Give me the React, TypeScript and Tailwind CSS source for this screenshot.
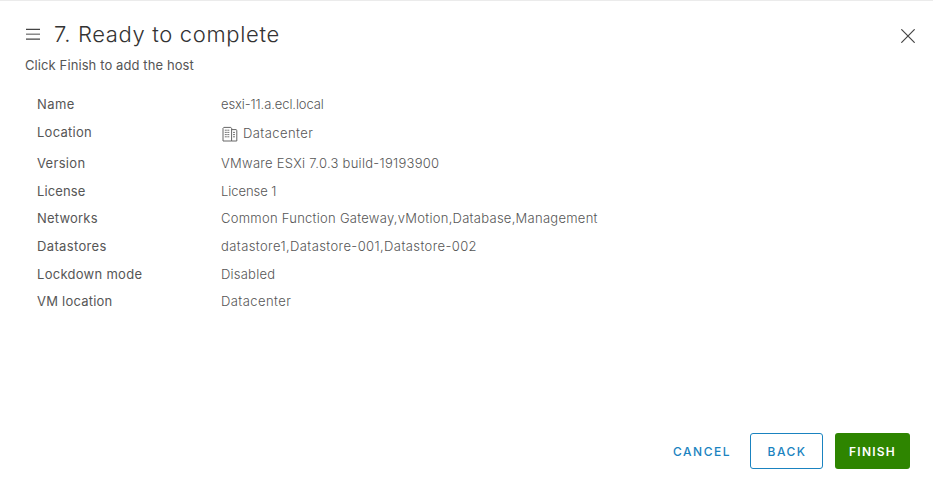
import React from 'react';

interface SummaryItem {
  label: string;
  value: string;
  labelClass: string;
  valueClass: string;
  icon?: boolean;
}

const SUMMARY: SummaryItem[] = [
  { label: 'Name', value: 'esxi-11.a.ecl.local', labelClass: 'tracking-[0.4px]', valueClass: 'tracking-[-0.1px]' },
  { label: 'Location', value: 'Datacenter', labelClass: 'tracking-[0.25px]', valueClass: 'tracking-[0.42px]', icon: true },
  { label: 'Version', value: 'VMware ESXi 7.0.3 build-19193900', labelClass: 'tracking-[0.3px]', valueClass: 'tracking-[0.28px]' },
  { label: 'License', value: 'License 1', labelClass: 'tracking-[0.1px]', valueClass: 'tracking-[-0.05px]' },
  { label: 'Networks', value: 'Common Function Gateway,vMotion,Database,Management', labelClass: 'tracking-[0.2px]', valueClass: 'tracking-[0.27px]' },
  { label: 'Datastores', value: 'datastore1,Datastore-001,Datastore-002', labelClass: 'tracking-[0.35px]', valueClass: 'tracking-[0.4px]' },
  { label: 'Lockdown mode', value: 'Disabled', labelClass: 'tracking-[0.28px]', valueClass: 'tracking-[0.22px]' },
  { label: 'VM location', value: 'Datacenter', labelClass: 'tracking-[0.22px]', valueClass: 'tracking-[0.42px]' },
];

export default function App() {
  return (
    <div className="h-[492px] w-[933px] flex flex-col overflow-hidden border-t border-[#ebebeb] bg-white font-['Inter',sans-serif] text-[#565656]">
      <header className="flex items-center h-[34px] mt-[16px] pl-[26px] pr-[18px]">
        <button type="button" className="w-[14px] shrink-0" aria-label="Steps">
          <MenuIcon />
        </button>
        <h1 className="ml-[14px] text-[22px] leading-[34px] font-light tracking-[0.65px] whitespace-nowrap text-[#333]">
          7. Ready to complete
        </h1>
        <button type="button" className="ml-auto mt-[3px]" aria-label="Close">
          <CloseIcon />
        </button>
      </header>

      <p className="pl-[25px] mt-[4px] text-[13px] leading-5 tracking-[0.1px] whitespace-nowrap text-[#555]">
        Click Finish to add the host
      </p>

      <dl className="mt-[16.4px] pl-[37px] text-[13px] whitespace-nowrap">
        {SUMMARY.map((item) => (
          <SummaryRow key={item.label} item={item} />
        ))}
      </dl>

      <footer className="mt-auto mb-[23px] pr-[23px] flex items-center justify-end text-[12px] font-medium">
        <button type="button" className="h-9 mr-[19px] pt-0.5 text-[#1a83c0] tracking-[1.5px]">
          CANCEL
        </button>
        <button
          type="button"
          className="h-9 w-[73px] mr-3 pt-0.5 pl-px rounded-[3px] border border-[#1a83c0] text-[#1a83c0] tracking-[1.5px]"
        >
          BACK
        </button>
        <button type="button" className="h-9 w-[75px] pt-0.5 rounded-[3px] bg-[#2e8500] text-white font-semibold tracking-[1.2px]">
          FINISH
        </button>
      </footer>
    </div>
  );
}

function SummaryRow({ item }: { item: SummaryItem }) {
  return (
    <div className={`flex leading-[27.66px] ${item.icon ? 'h-[31px]' : 'h-[27.66px]'}`}>
      <dt className={`w-[184px] ${item.labelClass}`}>{item.label}</dt>
      <dd className={`flex font-light ${item.valueClass} ${item.icon ? 'pt-px' : ''}`}>
        {item.icon && <DatacenterIcon />}
        {item.value}
      </dd>
    </div>
  );
}

function MenuIcon() {
  return (
    <svg width="14" height="12" viewBox="0 0 14 12" className="block" fill="none" stroke="#444" strokeWidth="1.3">
      <path d="M0 1.3h14M0 11.2h14" />
      <path d="M0 6.2h14" stroke="#777" />
    </svg>
  );
}

function CloseIcon() {
  return (
    <svg width="14" height="14" viewBox="0 0 14 14" className="block" fill="none" stroke="#444" strokeWidth="1.2">
      <path d="M.7.7l12.6 12.6M13.3.7L.7 13.3" strokeLinecap="round" />
    </svg>
  );
}

function DatacenterIcon() {
  return (
    <svg width="16" height="16" viewBox="0 0 16 16" className="mt-[6px] ml-[1px] mr-[5px]" fill="none" stroke="#666" strokeWidth="1">
      <path d="M1 15V2.2l.8-.8h7l.8.8V15zM9.6 3.6h4.6l.6.6V15H9.6" />
      <path d="M2.8 4.2h5M2.8 6.4h5M2.8 8.6h5M2.8 10.8h5M11 6.4h2.4M11 8.6h2.4M11 10.8h2.4" strokeDasharray="2 .5" strokeWidth=".9" />
    </svg>
  );
}
